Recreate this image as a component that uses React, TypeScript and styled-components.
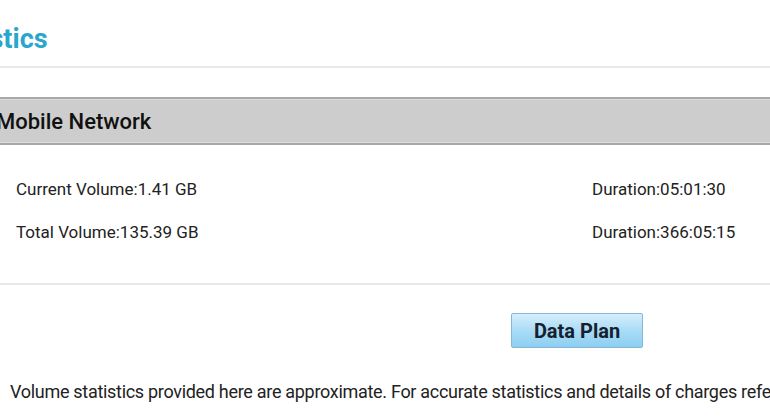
import React from 'react';
import styled, {createGlobalStyle} from "styled-components";

const GlobalStyle = createGlobalStyle`
    html, body {
        margin: 0;
        padding: 0;
        background: #ffffff;
        overflow: hidden;
    }
    body {
        font-family: Roboto, "Noto Sans", Arial, sans-serif;
        color: #222222;
    }
`;

type Usage = { volume: string; duration: string };

const rows: Usage[] = [
    {volume: "Current Volume:1.41 GB", duration: "Duration:05:01:30"},
    {volume: "Total Volume:135.39 GB", duration: "Duration:366:05:15"},
];

const App: React.FC = () => {
    return (
        <>
            <GlobalStyle/>
            <Viewport>
                <Page>
                    <Title>Statistics</Title>
                    <Rule/>
                    <SectionHeader>Mobile Network</SectionHeader>
                    <StatsList>
                        {rows.map((row, index) =>
                            <StatRow key={`${row.volume}${index}`}>
                                <StatCell>{row.volume}</StatCell>
                                <StatCell>{row.duration}</StatCell>
                            </StatRow>
                        )}
                    </StatsList>
                    <Rule/>
                    <ButtonBar>
                        <PlanButton type="button">Data Plan</PlanButton>
                    </ButtonBar>
                    <Footnote>
                        Volume statistics provided here are approximate. For accurate statistics and details of charges refer to your operator.
                    </Footnote>
                </Page>
            </Viewport>
        </>
    );
};

const Viewport = styled.div`
    width: 770px;
    height: 420px;
    overflow: hidden;
`;
const Page = styled.div`
    margin-left: -64px;
    width: 900px;
    display: flex;
    flex-direction: column;
`;
const Title = styled.h1`
    margin: 24px 0 0 -3px;
    font-size: 27px;
    line-height: 31px;
    font-weight: 700;
    color: #2aa6cc;
`;
const Rule = styled.div`
    height: 2px;
    background: #e8e8e8;
    margin-top: 11px;
`;
const SectionHeader = styled.div`
    margin-top: 29px;
    height: 48px;
    box-sizing: border-box;
    display: flex;
    align-items: center;
    padding-left: 60px;
    background: #cdcdcd;
    border-top: 2px solid #a8a8a8;
    border-bottom: 2px solid #a8a8a8;
    box-shadow: inset 0 1px 0 #dcdcdc, inset 0 -1px 0 #dcdcdc;
    font-size: 22px;
    font-weight: 500;
    color: #111111;
`;
const StatsList = styled.div`
    display: flex;
    flex-direction: column;
    gap: 23px;
    padding: 34px 0 30px 80px;
`;
const StatRow = styled.div`
    display: grid;
    grid-template-columns: 576px 1fr;
    font-size: 17px;
    line-height: 20px;
`;
const StatCell = styled.span`
    color: #222222;
`;
const ButtonBar = styled.div`
    display: flex;
    padding: 28px 0 0 575px;
`;
const PlanButton = styled.button`
    width: 132px;
    height: 35px;
    border: 1px solid #86b6d4;
    border-radius: 2px;
    background: linear-gradient(to bottom, #d6eefb 0%, #a9dcf6 50%, #8dcff2 100%);
    font-family: Roboto, Arial, sans-serif;
    font-size: 20px;
    font-weight: 700;
    color: #17202e;
    padding: 0;
`;
const Footnote = styled.p`
    margin: 33px 0 0 74px;
    font-size: 18px;
    line-height: 21px;
    letter-spacing: -0.3px;
    white-space: nowrap;
    color: #222222;
`;

export default App;
